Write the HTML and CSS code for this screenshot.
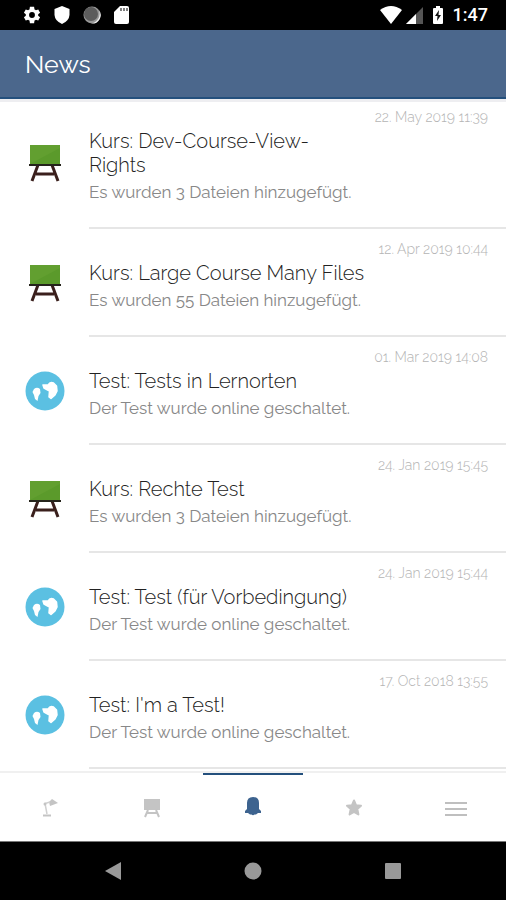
FILE: index.html
```html
<!DOCTYPE html>
<html lang="de">
<head>
  <meta charset="UTF-8" />
  <meta name="viewport" content="width=device-width, initial-scale=1.0"/>
  <title>News</title>
  <link rel="stylesheet" href="styles.css">
</head>
<body>
  <svg class="symbols" aria-hidden="true">
    <symbol id="board" viewBox="0 0 32 40">
      <path d="M9 22 3 38M23 22 29 38M7 31H25" fill="none" stroke="#3a1f1c" stroke-width="3"/>
      <path d="M1 2H31V21H1z" fill="#5b9a2b"/>
      <path d="M1 2H31V5L1 21z" fill="#629f30"/>
      <path d="M0 21H32V23H0z" fill="#25241c"/>
    </symbol>
    <symbol id="globe" viewBox="0 0 40 40">
      <circle cx="20" cy="20" r="19.500" fill="#5bc0e2"/>
      <path d="M9 18Q12 15.500 15 18L15.500 22 13.500 25 12.500 30 10 28 9 24 7.500 21z" fill="#fff"/>
      <path d="M18 14 23 14Q25 10.500 28.500 12L31.500 15 32 20 30 24 26 27.500 24 26 24.500 20 19 17z" fill="#fff" stroke="#fff" stroke-width="1.500" stroke-linejoin="round"/>
    </symbol>
  </svg>

  <div class="app">
    <div class="status-bar">
      <div class="status-left">
        <svg width="20" height="20" viewBox="0 0 24 24"><path fill="#fff" fill-rule="evenodd" d="M19.4 13a7.500 7.500 0 0 0 0-2l2.300-1.800-2.200-3.900-2.800 1.100a7.500 7.500 0 0 0-1.700-1L14.500 2h-5L9 5.400a7.500 7.500 0 0 0-1.700 1L4.500 5.300 2.300 9.200 4.600 11a7.500 7.500 0 0 0 0 2l-2.300 1.800 2.200 3.900 2.800-1.100a7.500 7.500 0 0 0 1.700 1l.5 3.400h5l.5-3.400a7.500 7.500 0 0 0 1.700-1l2.800 1.100 2.200-3.900zM12 8.500a3.500 3.500 0 1 1 0 7 3.500 3.500 0 0 1 0-7z"/></svg>
        <svg width="20" height="20" viewBox="0 0 20 20"><path fill="#fff" d="M10 1 17.500 4V10Q17 16 10 19 3 16 2.500 10V4z"/></svg>
        <svg width="20" height="20" viewBox="0 0 20 20"><circle cx="10" cy="10" r="8.500" fill="#999"/><path fill="#eee" d="M17 5A8.500 8.500 0 0 1 9 18.500 10 10 0 0 0 17 5z"/><circle cx="9" cy="9" r="7" fill="#5c5c5c"/></svg>
        <svg width="20" height="20" viewBox="0 0 20 20"><path fill="#fff" d="M8 1H15Q17 1 17 3V17Q17 19 15 19H4Q2 19 2 17V7z"/><path d="M9 3V6M12 3V6M15 3V6" stroke="#555" stroke-width="1.500"/></svg>
      </div>
      <div class="status-right">
        <svg width="22" height="20" viewBox="0 0 22 20"><path fill="#fff" d="M0 5Q11-3 22 5L11 19z"/></svg>
        <svg width="18" height="20" viewBox="0 0 18 20"><path fill="#555" d="M18 2V19H1z"/><path fill="#fff" d="M11 9V19H1z"/></svg>
        <svg class="battery" width="12" height="20" viewBox="0 0 12 20"><path fill="#fff" d="M4 1H8V3H10Q11 3 11 4V18Q11 19 10 19H2Q1 19 1 18V4Q1 3 2 3H4z"/><path fill="#111" d="M7 5 3 11H5.500L5 16 9 10H6.500z"/></svg>
        <span class="clock">1:47</span>
      </div>
    </div>

    <header class="header">
      <h1>News</h1>
    </header>

    <main class="news-list">
      <article class="news-item">
        <svg class="news-icon"><use href="#board"/></svg>
        <div class="news-body">
          <time>22. May 2019 11:39</time>
          <h2>Kurs: Dev-Course-View-Rights</h2>
          <p>Es wurden 3 Dateien hinzugefügt.</p>
        </div>
      </article>
      <article class="news-item">
        <svg class="news-icon"><use href="#board"/></svg>
        <div class="news-body">
          <time>12. Apr 2019 10:44</time>
          <h2>Kurs: Large Course Many Files</h2>
          <p>Es wurden 55 Dateien hinzugefügt.</p>
        </div>
      </article>
      <article class="news-item">
        <svg class="news-icon"><use href="#globe"/></svg>
        <div class="news-body">
          <time>01. Mar 2019 14:08</time>
          <h2>Test: Tests in Lernorten</h2>
          <p>Der Test wurde online geschaltet.</p>
        </div>
      </article>
      <article class="news-item">
        <svg class="news-icon"><use href="#board"/></svg>
        <div class="news-body">
          <time>24. Jan 2019 15:45</time>
          <h2>Kurs: Rechte Test</h2>
          <p>Es wurden 3 Dateien hinzugefügt.</p>
        </div>
      </article>
      <article class="news-item">
        <svg class="news-icon"><use href="#globe"/></svg>
        <div class="news-body">
          <time>24. Jan 2019 15:44</time>
          <h2>Test: Test (für Vorbedingung)</h2>
          <p>Der Test wurde online geschaltet.</p>
        </div>
      </article>
      <article class="news-item">
        <svg class="news-icon"><use href="#globe"/></svg>
        <div class="news-body">
          <time>17. Oct 2018 13:55</time>
          <h2>Test: I'm a Test!</h2>
          <p>Der Test wurde online geschaltet.</p>
        </div>
      </article>
    </main>

    <nav class="tabs">
      <button class="tab" aria-label="Schreibtisch">
        <svg width="24" height="24" viewBox="0 0 24 24" fill="#c4c4c4"><path d="M11 6 14 3 20 7 12 10z"/><path d="M5 18.500H13V20.500H5z"/><path d="M12 6 7 7.500 9 18" fill="none" stroke="#d0d0d0" stroke-width="1.500"/><circle cx="7" cy="8" r="1.500"/></svg>
      </button>
      <button class="tab" aria-label="Kurse">
        <svg width="24" height="24" viewBox="0 0 24 24"><path fill="#c4c4c4" d="M4 3H20V14H4z"/><path d="M8 14 5 21M16 14 19 21M7 17H17" fill="none" stroke="#c4c4c4" stroke-width="2"/></svg>
      </button>
      <button class="tab active" aria-label="News">
        <svg width="24" height="24" viewBox="0 0 24 24" fill="#3d638f"><path d="M12 1Q18 1 18 7V13L20 15V17H17L15 18.500H13.500Q12 20 10.500 18.500H9L7 17H4V15L6 13V7Q6 1 12 1z"/></svg>
      </button>
      <button class="tab" aria-label="Favoriten">
        <svg width="24" height="24" viewBox="0 0 24 24"><path fill="#c4c4c4" stroke="#c4c4c4" stroke-width="2" stroke-linejoin="round" d="M12 4.500 14 9.200 19 9.700 15.300 13 16.400 18.500 12 15.800 7.600 18.500 8.700 13 5 9.700 10 9.200z"/></svg>
      </button>
      <button class="tab" aria-label="Menü">
        <svg width="24" height="24" viewBox="0 0 24 24"><path d="M1 7H23M1 13H23M1 19H23" stroke="#bfbfbf" stroke-width="2"/></svg>
      </button>
    </nav>

    <div class="system-nav">
      <button aria-label="Zurück"><svg width="18" height="18" viewBox="0 0 18 18"><path fill="#999" d="M17 0V18L1 9z"/></svg></button>
      <button aria-label="Start"><svg width="18" height="18" viewBox="0 0 18 18"><circle cx="9" cy="9" r="8.500" fill="#999"/></svg></button>
      <button aria-label="Übersicht"><svg width="18" height="18" viewBox="0 0 18 18"><rect x="1" y="1" width="16" height="16" rx="1" fill="#999"/></svg></button>
    </div>
  </div>
</body>
</html>
```
FILE: styles.css
```css
:root {
  --primary-color: #4b678c;
  --accent-color: #24507d;
  --line-color: #e6e6e6;
  --font-family: Raleway, Lato, "Open Sans", sans-serif;
}

* {
  box-sizing: border-box;
}

body {
  margin: 0;
  font-family: var(--font-family);
  background-color: #fff;
}

button {
  display: flex;
  align-items: center;
  justify-content: center;
  padding: 0;
  border: none;
  background: none;
  cursor: pointer;
}

.symbols {
  display: none;
}

.app {
  display: flex;
  flex-direction: column;
  height: 100vh;
}

.status-bar {
  display: flex;
  flex-shrink: 0;
  align-items: center;
  justify-content: space-between;
  height: 30px;
  padding: 0 18px 0 22px;
  background-color: #000;
}

.status-left {
  display: flex;
  gap: 10px;
}

.status-right {
  display: flex;
  align-items: center;
  gap: 3px;
}

.battery {
  margin: 0 6px;
}

.clock {
  font: 500 18px/20px Roboto, sans-serif;
  color: #fff;
}

.header {
  display: flex;
  flex-shrink: 0;
  align-items: center;
  height: 67px;
  padding: 0 25px;
  background-color: var(--primary-color);
  box-shadow: 0 2px var(--accent-color), 0 5px #eeeef1;
  z-index: 1;
}

.header h1 {
  margin: 0;
  font-size: 25px;
  font-weight: 400;
  color: #fff;
}

.news-list {
  flex: 1;
  min-height: 0;
  overflow: hidden;
}

.news-item {
  display: flex;
  align-items: center;
  padding-left: 25px;
}

.news-icon {
  flex-shrink: 0;
  width: 40px;
  height: 40px;
  margin-right: 24px;
}

.news-body {
  flex: 1;
  padding: 11px 18px 23px 0;
  border-bottom: 2px solid var(--line-color);
}

.news-body time {
  display: block;
  font-size: 14px;
  font-weight: 300;
  line-height: 18px;
  text-align: right;
  color: #b4b4b4;
}

.news-body h2 {
  max-width: 275px;
  margin: 3px 0;
  font-size: 20px;
  font-weight: 300;
  line-height: 24px;
  color: #222;
}

.news-body p {
  margin: 0;
  font-size: 17px;
  font-weight: 400;
  line-height: 24px;
  color: #888;
}

.tabs {
  display: flex;
  flex-shrink: 0;
  gap: 1px;
  height: 70px;
  border-top: 2px solid #f0f0f0;
}

.tab {
  flex: 1;
  border-top: 2px solid transparent;
}

.tab.active {
  border-top-color: var(--accent-color);
}

.system-nav {
  display: flex;
  flex-shrink: 0;
  align-items: center;
  justify-content: center;
  gap: 122px;
  height: 59px;
  border-top: 1px solid #777;
  background-color: #000;
}
```
